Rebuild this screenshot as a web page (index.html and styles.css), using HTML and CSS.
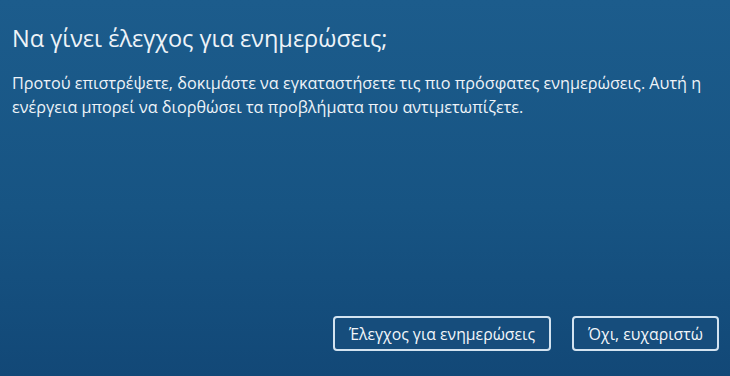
FILE: index.html
```html
<!DOCTYPE html>
<html>
<head>
<meta charset="UTF-8"/>
<title>Έλεγχος για ενημερώσεις</title>
<link rel="stylesheet" href="styles.css">
</head>
<body>
<section class="dialog">
<h1 class="title">Να γίνει έλεγχος για ενημερώσεις;</h1>
<p class="text">Προτού επιστρέψετε, δοκιμάστε να εγκαταστήσετε τις πιο πρόσφατες ενημερώσεις. Αυτή η ενέργεια μπορεί να διορθώσει τα προβλήματα που αντιμετωπίζετε.</p>
<div class="actions">
<button class="btn btn-check">Έλεγχος για ενημερώσεις</button>
<button class="btn btn-no">Όχι, ευχαριστώ</button>
</div>
</section>
</body>
</html>
```

FILE: styles.css
```css
html, body {
    height: 100%;
}
body {
    margin: 0;
    font-family: "Open Sans", "Noto Sans", sans-serif;
    color: #eef3f8;
    background: linear-gradient(to bottom, #1c5c8c 0%, #175483 55%, #124877 100%);
}
.dialog {
    box-sizing: border-box;
    height: 100%;
    padding: 21px 11px 25px 12px;
    display: flex;
    flex-direction: column;
}
.title {
    margin: 0;
    font-size: 23.5px;
    font-weight: 400;
    line-height: 34px;
}
.text {
    margin: 16px 0 0 0;
    font-size: 16.2px;
    line-height: 24px;
    width: 705px;
}
.actions {
    margin-top: auto;
    display: flex;
    justify-content: flex-end;
    gap: 21px;
}
.btn {
    box-sizing: border-box;
    font-family: inherit;
    font-size: 15.8px;
    color: #f2f6fa;
    background: #164d7c;
    border: 2px solid #d3e3f0;
    border-radius: 4px;
    height: 35px;
    padding: 0;
}
.btn-check {
    width: 218px;
}
.btn-no {
    width: 147px;
}
```
